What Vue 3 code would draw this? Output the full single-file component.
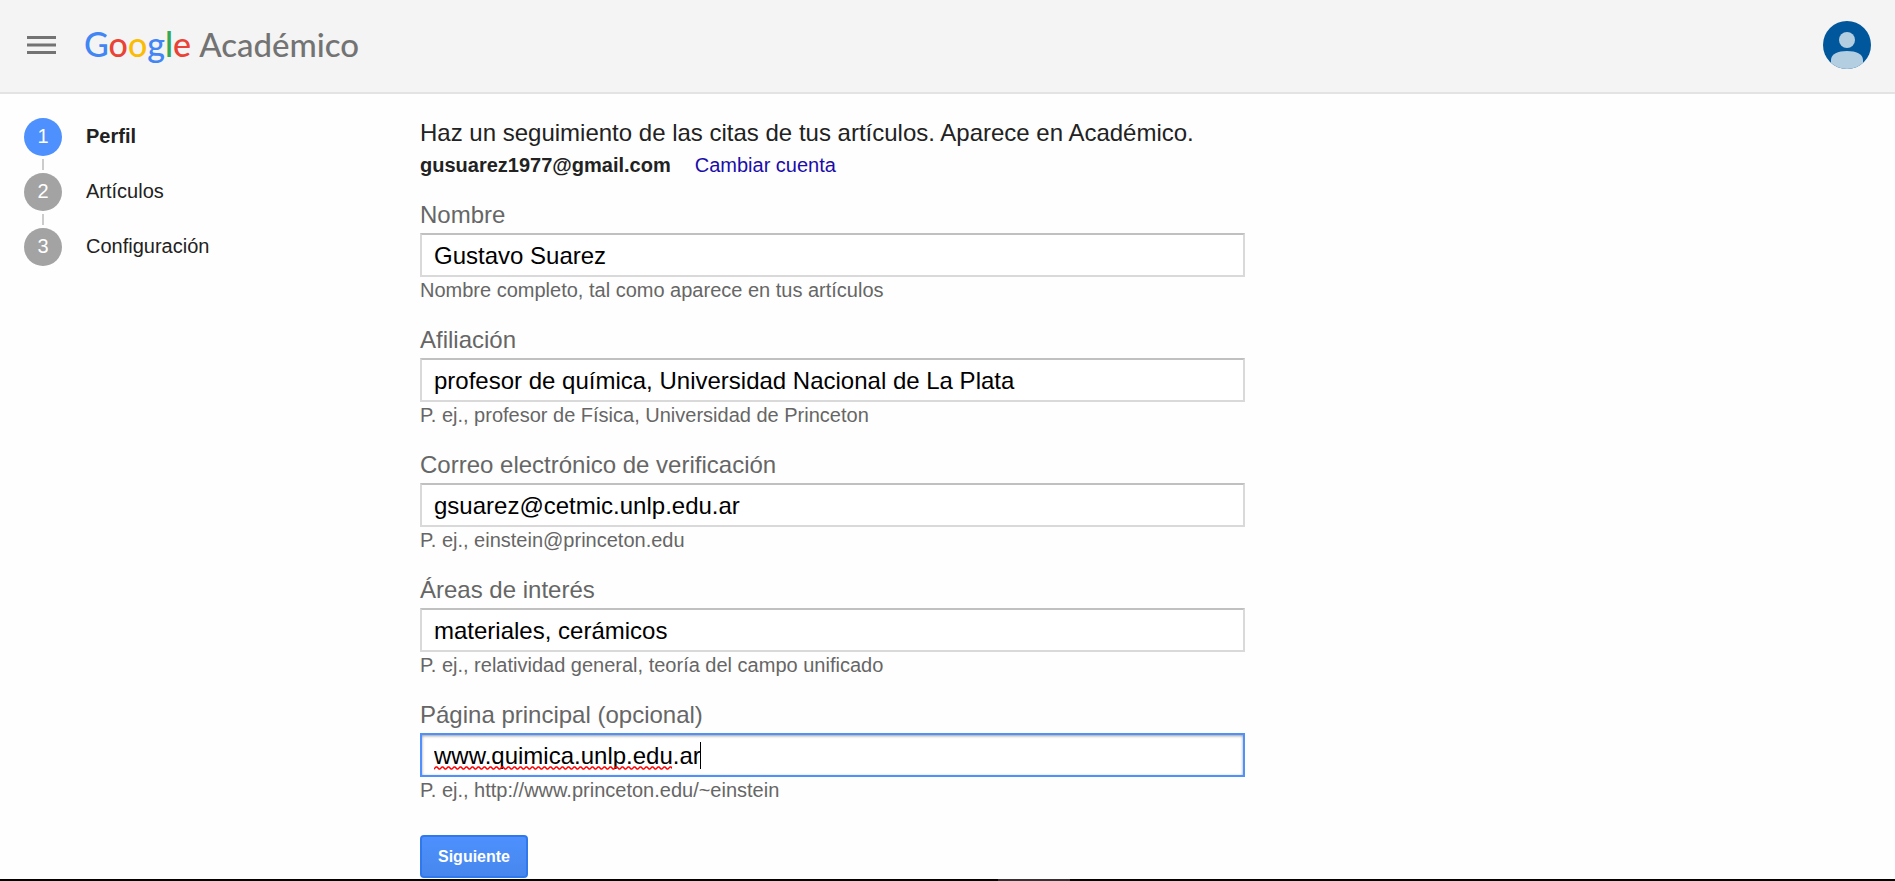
<script setup>
import { ref } from 'vue'

const steps = ['Perfil', 'Artículos', 'Configuración']

const fields = ref([
  { id: 'name', label: 'Nombre', value: 'Gustavo Suarez', hint: 'Nombre completo, tal como aparece en tus artículos' },
  { id: 'affiliation', label: 'Afiliación', value: 'profesor de química, Universidad Nacional de La Plata', hint: 'P. ej., profesor de Física, Universidad de Princeton' },
  { id: 'email', label: 'Correo electrónico de verificación', value: 'gsuarez@cetmic.unlp.edu.ar', hint: 'P. ej., einstein@princeton.edu' },
  { id: 'interests', label: 'Áreas de interés', value: 'materiales, cerámicos', hint: 'P. ej., relatividad general, teoría del campo unificado' },
  { id: 'homepage', label: 'Página principal (opcional)', value: 'www.quimica.unlp.edu.ar', hint: 'P. ej., http://www.princeton.edu/~einstein', active: true },
])
</script>

<template>
  <div class="page">
    <header class="topbar">
      <button class="menu" type="button" aria-label="Menú">
        <svg width="29" height="18" viewBox="0 0 29 18"><path d="M0 1.5h29M0 9h29M0 16.5h29" stroke="#737373" stroke-width="3" /></svg>
      </button>
      <a class="logo" href="#">
        <span class="google"><span class="b">G</span><span class="r">o</span><span class="y">o</span><span class="b">g</span><span class="g">l</span><span class="r">e</span></span>
        <span class="scholar">Académico</span>
      </a>
      <button class="avatar" type="button" aria-label="Cuenta">
        <svg width="48" height="48" viewBox="0 0 48 48">
          <clipPath id="disc"><circle cx="24" cy="24" r="24" /></clipPath>
          <g clip-path="url(#disc)">
            <rect width="48" height="48" fill="#01579b" />
            <circle cx="24" cy="19" r="8" fill="#b3cde1" />
            <path d="M8 48V39C8 33 15 30 24 30s16 3 16 9v9z" fill="#b3cde1" />
          </g>
        </svg>
      </button>
    </header>

    <main class="content">
      <ol class="steps">
        <li v-for="(step, i) in steps" :key="step" :class="{ current: i === 0 }">
          <span class="num">{{ i + 1 }}</span>
          <span class="step-name">{{ step }}</span>
        </li>
      </ol>

      <form class="form" @submit.prevent>
        <h1>Haz un seguimiento de las citas de tus artículos. Aparece en Académico.</h1>
        <p class="account"><b>gusuarez1977@gmail.com</b><a href="#">Cambiar cuenta</a></p>

        <div v-for="f in fields" :key="f.id" class="field">
          <label :for="f.id">{{ f.label }}</label>
          <div class="box">
            <input :id="f.id" v-model="f.value" type="text" :class="{ active: f.active }" spellcheck="false">
            <template v-if="f.active">
              <svg class="squiggle" width="238" height="4">
                <defs>
                  <pattern id="wave" width="6" height="4" patternUnits="userSpaceOnUse">
                    <path d="M-1 3.5L0 3L2 1H3L5 3H6L7 3.5" fill="none" stroke="#f00" stroke-width="1.5" />
                  </pattern>
                </defs>
                <rect width="238" height="4" fill="url(#wave)" />
              </svg>
              <span class="caret"></span>
            </template>
          </div>
          <p class="hint">{{ f.hint }}</p>
        </div>

        <button class="next" type="submit">Siguiente</button>
      </form>
    </main>

    <footer class="edge"><span></span></footer>
  </div>
</template>

<style>
body {
  margin: 0;
  background: #fefefe;
}
</style>

<style scoped>
.page {
  display: flex;
  flex-direction: column;
  min-height: 100vh;
  font-family: "Liberation Sans", Arial, sans-serif;
  font-size: 20px;
  color: #222;
}
.topbar {
  display: flex;
  align-items: center;
  box-sizing: border-box;
  height: 94px;
  padding: 0 24px 2px 27px;
  background: #f4f4f4;
  border-bottom: 2px solid #e3e3e3;
}
button {
  font-family: inherit;
  cursor: pointer;
}
.menu,
.avatar {
  display: flex;
  padding: 0;
  border: 0;
  background: none;
}
.avatar {
  margin-left: auto;
}
.logo {
  display: flex;
  align-items: baseline;
  gap: 8px;
  margin-left: 28px;
  padding-bottom: 4px;
  font-family: Lato, sans-serif;
  font-weight: 500;
  text-decoration: none;
}
.google {
  font-size: 34px;
}
.scholar {
  font-size: 33px;
  color: #737373;
}
.b { color: #4285f4; }
.r { color: #ea4335; }
.y { color: #fbbc05; }
.g { color: #34a853; }

.content {
  display: grid;
  grid-template-columns: 396px minmax(0, 825px);
  padding: 24px;
  padding-bottom: 0;
}
.steps {
  margin: 0;
  padding: 0;
  list-style: none;
}
.steps li {
  display: flex;
  position: relative;
  height: 38px;
  margin-bottom: 17px;
  line-height: 36px;
}
.steps li + li::before {
  content: "";
  position: absolute;
  left: 18px;
  top: -14px;
  width: 2px;
  height: 11px;
  background: #ccc;
}
.num {
  width: 38px;
  margin-right: 24px;
  border-radius: 50%;
  background: #a3a3a3;
  color: #fff;
  text-align: center;
}
.current .num {
  background: #4d90fe;
}
.current .step-name {
  font-weight: bold;
}

h1 {
  margin: 0;
  font-size: 24px;
  font-weight: normal;
  line-height: 30px;
}
.account {
  display: flex;
  gap: 24px;
  margin: 0 0 20px;
  line-height: 34px;
}
.account a {
  color: #1a0dab;
  text-decoration: none;
}
.field {
  height: 125px;
}
label {
  display: block;
  margin-bottom: 6px;
  color: #666;
  font-size: 24px;
  line-height: 25px;
}
.box {
  position: relative;
}
input {
  display: block;
  box-sizing: border-box;
  width: 100%;
  height: 44px;
  padding: 2px 12px 0;
  border: 2px solid #d9d9d9;
  border-top-color: #c0c0c0;
  outline: 0;
  background: #fff;
  color: #000;
  font: 24px "Liberation Sans", Arial, sans-serif;
}
input.active {
  border-color: #4d90fe;
  box-shadow: inset 0 1px 3px rgba(0, 0, 0, 0.4);
}
.squiggle {
  position: absolute;
  left: 14px;
  bottom: 7px;
}
.caret {
  position: absolute;
  left: 280px;
  top: 9px;
  width: 1px;
  height: 27px;
  background: #000;
}
.hint {
  margin: 0;
  color: #666;
  line-height: 26px;
}
.next {
  display: block;
  height: 43px;
  margin-top: 8px;
  padding: 0 16px;
  border: 2px solid #3079ed;
  border-radius: 4px;
  background: linear-gradient(#4d90fe, #4787ed);
  color: #fff;
  font-size: 16px;
  font-weight: bold;
}
.edge {
  height: 2px;
  margin-top: auto;
  background: #000;
}
.edge span {
  display: block;
  width: 72px;
  height: 2px;
  margin-left: calc(50% + 50px);
  background: #333;
}
</style>
